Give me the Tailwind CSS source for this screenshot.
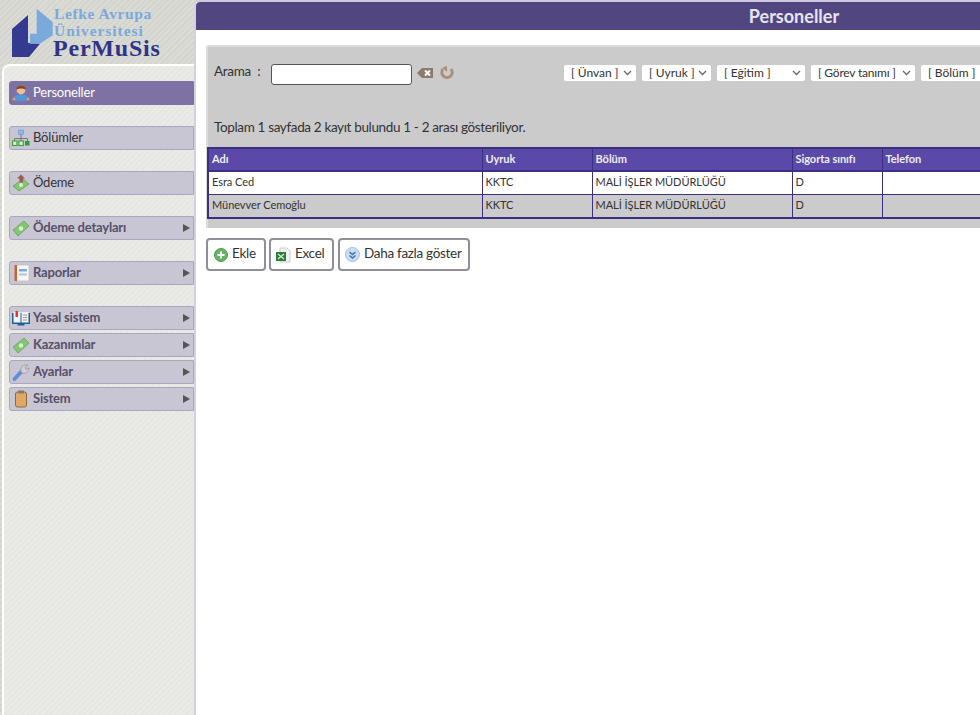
<!DOCTYPE html>
<html lang="tr">
<head>
    <meta charset="UTF-8">
    <title>Personeller</title>
    <script src="https://cdn.jsdelivr.net/npm/@tailwindcss/browser@4"></script>
</head>
<body class="w-[980px] h-[715px] overflow-hidden bg-white font-['Lato',sans-serif] text-[#333]">
<div class="flex h-[715px]">

    <!-- sol menu -->
    <aside class="w-[196px] shrink-0 flex flex-col border-r-2 border-[#d4d0e0] bg-[#d9d9d3] bg-[repeating-linear-gradient(135deg,#dcdcd6_0,#dcdcd6_2px,#d4d4ce_2px,#d4d4ce_4px)]">
        <div class="h-[64px] flex pl-[12px] pt-[5px]">
            <svg class="shrink-0" width="42" height="54" viewBox="0 0 42 54">
                <path d="M0 24 L16 10 L16 38 L28 38.7 L17 52 L0 52 Z" fill="#333a8f"/>
                <path d="M24.7 3.7 L40.7 17 L40.7 30.3 L28 38.7 L18 38.7 L18 28.7 L24.7 28.7 Z" fill="#7aa9dc"/>
            </svg>
            <div class="font-['Liberation_Serif',serif] font-bold whitespace-nowrap">
                <div class="text-[#7aa9dc] text-[15.5px] leading-[16px] tracking-[0.6px] pt-[1px]">Lefke Avrupa</div>
                <div class="text-[#7aa9dc] text-[15.5px] leading-[15px] tracking-[0.95px] mt-[1px]">Üniversitesi</div>
                <div class="text-[#2e3588] text-[24px] leading-[19px] tracking-[0.8px] -ml-[1px] mt-[1px]">PerMuSis</div>
            </div>
        </div>
        <nav class="flex-1 flex flex-col ml-[2px] pt-[15px] pl-[5px] border-l-2 border-t-2 border-white rounded-tl-lg bg-[#e8e8e5] bg-[repeating-linear-gradient(135deg,#eaeae7_0,#eaeae7_2px,#e6e6e3_2px,#e6e6e3_4px)] text-[13px] tracking-[-0.2px]">
            <a class="h-[24px] flex items-center pb-[1px] bg-[#7d72a3] text-white border border-[#7d72a3] rounded-l-[3px]">
                <svg class="ml-[1px] w-[20px] h-[20px]" viewBox="0 0 20 20"><path d="M2 17 C2 12 6 11.5 10 11.5 C14 11.5 18 12 18 17 C14 18.5 6 18.5 2 17 Z" fill="#4f96dc"/><circle cx="3" cy="16" r="1.5" fill="#e89a4c"/><circle cx="17" cy="16" r="1.5" fill="#e89a4c"/><circle cx="10" cy="7" r="4.4" fill="#f0c09a"/><path d="M5.3 7 C5 1 15 1 14.7 7 C13 5 7 5 5.3 7 Z" fill="#7a4a26"/></svg>
                <span class="ml-[2px]">Personeller</span>
            </a>
            <a class="mt-[21px] h-[24px] flex items-center pb-[1px] bg-[#c9c6d4] border border-[#aaa6c2] rounded-l-[3px] text-[#333]">
                <svg class="ml-[1px] w-[20px] h-[20px]" viewBox="0 0 20 20"><rect x="7.5" y="2" width="5" height="4.5" fill="#8fb8ea" stroke="#6a94c8" stroke-width=".6"/><path d="M10 6.5 V10.5 M3.5 13 V10.5 H16.5 V13 M10 10.5 V13" stroke="#777" fill="none"/><rect x="1.5" y="13" width="4.5" height="4.5" fill="#d6efd0" stroke="#45a03c" stroke-width="1.2"/><rect x="7.8" y="13" width="4.5" height="4.5" fill="#d6efd0" stroke="#45a03c" stroke-width="1.2"/><rect x="14" y="13" width="4.5" height="4.5" fill="#2f9a34"/></svg>
                <span class="ml-[2px]">Bölümler</span>
            </a>
            <a class="mt-[21px] h-[24px] flex items-center pb-[1px] bg-[#c9c6d4] border border-[#aaa6c2] rounded-l-[3px] text-[#333]">
                <svg class="ml-[1px] w-[20px] h-[20px]" viewBox="0 0 20 20"><path d="M2 13 L12 6 L18 11 L8 18 Z" fill="#82c873" stroke="#5a9c4c" stroke-width=".7"/><circle cx="10" cy="12" r="2" fill="#d8f0cf"/><path d="M10 1.5 L14 5.5 H12 V9.5 H8.5 V5.5 H6 Z" fill="#9c5a50"/></svg>
                <span class="ml-[2px]">Ödeme</span>
            </a>
            <a class="mt-[21px] h-[24px] flex items-center pb-[1px] bg-[#c9c6d4] border border-[#aaa6c2] rounded-l-[3px] text-[#55506a] font-bold">
                <svg class="ml-[1px] w-[20px] h-[20px]" viewBox="0 0 20 20"><path d="M2 12 L13 3 L18 8 L7 18 Z" fill="#82c873" stroke="#5a9c4c" stroke-width=".7"/><circle cx="10" cy="10.5" r="2.2" fill="#d8f0cf"/></svg>
                <span class="ml-[2px]">Ödeme detayları</span>
                <span class="ml-auto mr-[3px] w-0 h-0 border-y-[4px] border-y-transparent border-l-[7px] border-l-[#555]"></span>
            </a>
            <a class="mt-[21px] h-[24px] flex items-center pb-[1px] bg-[#c9c6d4] border border-[#aaa6c2] rounded-l-[3px] text-[#55506a] font-bold">
                <svg class="ml-[1px] w-[20px] h-[20px]" viewBox="0 0 20 20"><rect x="5" y="2" width="13" height="16" fill="#f6f6f4" stroke="#b5b5b5" stroke-width=".6"/><rect x="3.5" y="2" width="2.5" height="16" fill="#c8642c"/><rect x="8" y="6" width="8" height="2.5" fill="#7fa8e0"/><rect x="8" y="10.5" width="8" height="2" fill="#a9c4ea"/></svg>
                <span class="ml-[2px]">Raporlar</span>
                <span class="ml-auto mr-[3px] w-0 h-0 border-y-[4px] border-y-transparent border-l-[7px] border-l-[#555]"></span>
            </a>
            <a class="mt-[21px] h-[24px] flex items-center pb-[1px] bg-[#c9c6d4] border border-[#aaa6c2] rounded-l-[3px] text-[#55506a] font-bold">
                <svg class="ml-[1px] w-[20px] h-[20px]" viewBox="0 0 20 20"><rect x="1" y="5" width="18" height="11" fill="#1f5f9e"/><rect x="6.5" y="16" width="7" height="1.5" fill="#1f5f9e"/><rect x="2.5" y="4" width="7" height="10.5" fill="#f2f2f2"/><rect x="10.5" y="4" width="7" height="10.5" fill="#f2f2f2"/><rect x="4.5" y="3" width="2.5" height="6" fill="#d83a2c"/><path d="M12 7 H16 M12 9.5 H16 M12 12 H16" stroke="#999"/></svg>
                <span class="ml-[2px]">Yasal sistem</span>
                <span class="ml-auto mr-[3px] w-0 h-0 border-y-[4px] border-y-transparent border-l-[7px] border-l-[#555]"></span>
            </a>
            <a class="mt-[3px] h-[24px] flex items-center pb-[1px] bg-[#c9c6d4] border border-[#aaa6c2] rounded-l-[3px] text-[#55506a] font-bold">
                <svg class="ml-[1px] w-[20px] h-[20px]" viewBox="0 0 20 20"><path d="M2 12 L13 3 L18 8 L7 18 Z" fill="#82c873" stroke="#5a9c4c" stroke-width=".7"/><circle cx="10" cy="10.5" r="2.2" fill="#d8f0cf"/></svg>
                <span class="ml-[2px]">Kazanımlar</span>
                <span class="ml-auto mr-[3px] w-0 h-0 border-y-[4px] border-y-transparent border-l-[7px] border-l-[#555]"></span>
            </a>
            <a class="mt-[3px] h-[24px] flex items-center pb-[1px] bg-[#c9c6d4] border border-[#aaa6c2] rounded-l-[3px] text-[#55506a] font-bold">
                <svg class="ml-[1px] w-[20px] h-[20px]" viewBox="0 0 20 20"><path d="M3.5 17 L11 9" stroke="#5f8fd6" stroke-width="4" stroke-linecap="round" fill="none"/><path d="M10 10 C9 5 12 2 17 3 L14 5.5 L15 7.5 L18 6 C18 10 14 12 11 11 Z" fill="#d0d0d0" stroke="#888" stroke-width=".6"/></svg>
                <span class="ml-[2px]">Ayarlar</span>
                <span class="ml-auto mr-[3px] w-0 h-0 border-y-[4px] border-y-transparent border-l-[7px] border-l-[#555]"></span>
            </a>
            <a class="mt-[3px] h-[24px] flex items-center pb-[1px] bg-[#c9c6d4] border border-[#aaa6c2] rounded-l-[3px] text-[#55506a] font-bold">
                <svg class="ml-[1px] w-[20px] h-[20px]" viewBox="0 0 20 20"><rect x="4.5" y="3" width="11" height="15" rx="2" fill="#e0a868" stroke="#8a6a3c"/><rect x="7" y="1.5" width="6" height="3" fill="#8a7a64"/></svg>
                <span class="ml-[2px]">Sistem</span>
                <span class="ml-auto mr-[3px] w-0 h-0 border-y-[4px] border-y-transparent border-l-[7px] border-l-[#555]"></span>
            </a>
        </nav>
    </aside>

    <!-- icerik -->
    <main class="flex-1 min-w-0 overflow-hidden border-t-2 border-[#cfc9de]">
        <h1 class="h-[28px] bg-[#524681] text-[#e6e4f2] text-[18px] font-bold text-center leading-[28px] rounded-tl-[4px] w-[1196px]">Personeller</h1>

        <section class="mt-[15px] ml-[10px] w-[900px] h-[183px] bg-[#cbcbcb] border-t-2 border-l-2 border-[#dcdcdc] rounded-tl-[3px] flex flex-col">
            <div class="flex items-center h-[24px] mt-[14px] ml-[6px] text-[13.5px] tracking-[-0.3px]">
                <span class="w-[57px] pb-[3px]">Arama&nbsp; :</span>
                <input type="text" class="w-[141px] h-[21px] mt-[2px] bg-white border border-[#555] rounded-[3px]">
                <svg class="ml-[5px] w-[17px] h-[12px]" viewBox="0 0 17 12"><path d="M0 6 L5 1 H16 V11 H5 Z" fill="#8c7b6c"/><path d="M8 3.5 L13 8.5 M13 3.5 L8 8.5" stroke="#fff" stroke-width="2"/></svg>
                <svg class="ml-[6px] w-[14px] h-[14px]" viewBox="0 0 14 14"><path d="M3 3 A5.2 5.2 0 1 0 11 3" fill="none" stroke="#a88f78" stroke-width="3"/><path d="M7 0 V6 L2.5 1.5 Z" fill="#a88f78"/></svg>
                <div class="ml-[110px] flex gap-[6px] text-[12px] tracking-normal shrink-0">
                    <div class="w-[72px] h-[16px] bg-white rounded-[2px] flex items-center pl-[7px] justify-between"><span>[ Ünvan ]</span><svg class="mr-[4px]" width="9" height="6" viewBox="0 0 9 6"><path d="M1 1 L4.5 4.5 L8 1" stroke="#666" fill="none" stroke-width="1.3"/></svg></div>
                    <div class="w-[69px] h-[16px] bg-white rounded-[2px] flex items-center pl-[7px] justify-between"><span>[ Uyruk ]</span><svg class="mr-[4px]" width="9" height="6" viewBox="0 0 9 6"><path d="M1 1 L4.5 4.5 L8 1" stroke="#666" fill="none" stroke-width="1.3"/></svg></div>
                    <div class="w-[88px] h-[16px] bg-white rounded-[2px] flex items-center pl-[7px] justify-between"><span>[ Eğitim ]</span><svg class="mr-[4px]" width="9" height="6" viewBox="0 0 9 6"><path d="M1 1 L4.5 4.5 L8 1" stroke="#666" fill="none" stroke-width="1.3"/></svg></div>
                    <div class="w-[104px] h-[16px] bg-white rounded-[2px] flex items-center pl-[7px] justify-between"><span class="tracking-[-0.2px]">[ Görev tanımı ]</span><svg class="mr-[4px]" width="9" height="6" viewBox="0 0 9 6"><path d="M1 1 L4.5 4.5 L8 1" stroke="#666" fill="none" stroke-width="1.3"/></svg></div>
                    <div class="w-[104px] h-[16px] bg-white rounded-[2px] flex items-center pl-[7px] justify-between"><span>[ Bölüm ]</span></div>
                </div>
            </div>
            <p class="mt-[33px] ml-[6px] text-[13.5px] tracking-[-0.35px] leading-[18px]">Toplam 1 sayfada 2 kayıt bulundu 1 - 2 arası gösteriliyor.</p>

            <table class="mt-[11px] -ml-[1px] w-[890px] table-fixed border-collapse text-[11px] tracking-[-0.05px] text-[#333]">
                <colgroup>
                    <col class="w-[274px]"><col class="w-[110px]"><col class="w-[200px]"><col class="w-[90px]"><col>
                </colgroup>
                <thead>
                    <tr class="h-[23px] bg-[#5a49a8] text-[#eeeeee] text-left">
                        <th class="border-2 border-[#3d2f80] border-r border-l-2 pl-[3px]">Adı</th>
                        <th class="border-y-2 border-x border-[#3d2f80] pl-[3px]">Uyruk</th>
                        <th class="border-y-2 border-x border-[#3d2f80] pl-[3px]">Bölüm</th>
                        <th class="border-y-2 border-x border-[#3d2f80] pl-[3px]">Sigorta sınıfı</th>
                        <th class="border-y-2 border-x border-[#3d2f80] pl-[3px]">Telefon</th>
                    </tr>
                </thead>
                <tbody>
                    <tr class="h-[23px] bg-white">
                        <td class="border border-l-2 border-[#3d2f80] pl-[3px] pb-[2px]">Esra Ced</td>
                        <td class="border border-[#3d2f80] pl-[3px] pb-[2px]">KKTC</td>
                        <td class="border border-[#3d2f80] pl-[3px] pb-[2px]">MALİ İŞLER MÜDÜRLÜĞÜ</td>
                        <td class="border border-[#3d2f80] pl-[3px] pb-[2px]">D</td>
                        <td class="border border-[#3d2f80]"></td>
                    </tr>
                    <tr class="h-[24px] bg-[#cbcbcb]">
                        <td class="border border-l-2 border-b-2 border-[#3d2f80] pl-[3px] pb-[2px]">Münevver Cemoğlu</td>
                        <td class="border border-b-2 border-[#3d2f80] pl-[3px] pb-[2px]">KKTC</td>
                        <td class="border border-b-2 border-[#3d2f80] pl-[3px] pb-[2px]">MALİ İŞLER MÜDÜRLÜĞÜ</td>
                        <td class="border border-b-2 border-[#3d2f80] pl-[3px] pb-[2px]">D</td>
                        <td class="border border-b-2 border-[#3d2f80]"></td>
                    </tr>
                </tbody>
            </table>
        </section>

        <div class="mt-[10px] ml-[10px] flex gap-[3px] text-[13.5px] tracking-[-0.3px] text-[#333] whitespace-nowrap">
            <button class="h-[33px] w-[60px] pb-[3px] bg-white border-2 border-[#8f8f9a] rounded-[4px] flex items-center pl-[6px] gap-[4px]">
                <svg class="mt-[3px]" width="14" height="14" viewBox="0 0 14 14"><circle cx="7" cy="7" r="6.5" fill="#67b565" stroke="#4d9a4c"/><path d="M7 3.5 V10.5 M3.5 7 H10.5" stroke="#fff" stroke-width="2"/></svg>Ekle
            </button>
            <button class="h-[33px] w-[65px] pb-[3px] bg-white border-2 border-[#8f8f9a] rounded-[4px] flex items-center pl-[4px] gap-[4px]">
                <svg class="mt-[3px]" width="16" height="16" viewBox="0 0 16 16"><path d="M5 1 H12 L15 4 V15 H5 Z" fill="#f2f2f2" stroke="#ccc"/><rect x="1" y="5" width="10" height="9" fill="#2f7d3c"/><path d="M3 7 L9 12 M9 7 L3 12" stroke="#d8f0cf" stroke-width="1.2"/></svg>Excel
            </button>
            <button class="h-[33px] w-[132px] pb-[3px] ml-[1px] bg-white border-2 border-[#8f8f9a] rounded-[4px] flex items-center pl-[5px] gap-[4px]">
                <svg class="mt-[3px]" width="15" height="15" viewBox="0 0 15 15"><circle cx="7.5" cy="7.5" r="7" fill="#c9def5" stroke="#9fbfe4"/><path d="M4.5 5 L7.5 7.5 L10.5 5 M4.5 8.5 L7.5 11 L10.5 8.5" stroke="#3a6fb5" stroke-width="1.4" fill="none"/></svg>Daha fazla göster
            </button>
        </div>
    </main>
</div>
</body>
</html>
